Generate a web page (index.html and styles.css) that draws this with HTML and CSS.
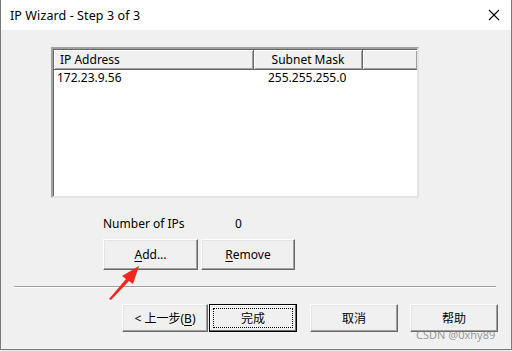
FILE: index.html
```html
<!DOCTYPE html>
<html>
<head>
<meta charset="utf-8">
<link rel="stylesheet" href="styles.css">
</head>
<body>
<div class="window">
  <div class="titlebar">
    <span class="title">IP Wizard - Step 3 of 3</span>
    <svg class="close" width="12" height="12" viewBox="0 0 12 12"><path d="M1 1 L11 11 M11 1 L1 11" stroke="#000" stroke-width="1.1" fill="none"/></svg>
  </div>
  <div class="content">
    <div class="list">
      <div class="header">
        <div class="hcell c1">IP Address</div>
        <div class="hcell c2">Subnet Mask</div>
        <div class="hcell c3"></div>
      </div>
      <div class="row">
        <div class="cell c1">172.23.9.56</div>
        <div class="cell c2">255.255.255.0</div>
      </div>
    </div>
    <div class="count">
      <span class="count-label">Number of IPs</span>
      <span class="count-val">0</span>
    </div>
    <div class="actions">
      <button class="btn btn-add"><u>A</u>dd...</button>
      <button class="btn btn-remove"><u>R</u>emove</button>
    </div>
    <div class="sep"></div>
    <div class="footer">
      <button class="btn fbtn back">&lt;&nbsp;上一步(<u>B</u>)</button>
      <button class="btn fbtn finish"><span class="focus">完成</span></button>
      <button class="btn fbtn cancel">取消</button>
      <button class="btn fbtn help">帮助</button>
    </div>
  </div>
  <svg class="arrow" width="40" height="40" viewBox="0 0 40 40"><path d="M3 37 L20 17 L16 14 L33 4 L27 22 L23 19 L5 38 Z" fill="#f0281e"/></svg>
  <span class="watermark">CSDN @0xhy89</span>
</div>
</body>
</html>
```
FILE: styles.css
```css
html, body {
  margin: 0;
  padding: 0;
  background: #e6e6e6;
}
body {
  width: 512px;
  height: 351px;
  overflow: hidden;
  font-family: "Noto Sans", "Noto Sans CJK SC", sans-serif;
  font-size: 12px;
  color: #000;
}
.window {
  position: relative;
  width: 510px;
  height: 349px;
  border-left: 1px solid #7a7a7a;
  border-right: 1px solid #7a7a7a;
  border-bottom: 1px solid #7a7a7a;
  background: #f0f0f0;
  display: flex;
  flex-direction: column;
}
.titlebar {
  height: 30px;
  background: #fff;
  display: flex;
  align-items: center;
  justify-content: space-between;
  padding: 0 10px 0 9px;
}
.title {
  font-size: 12.5px;
  letter-spacing: 0.1px;
}
.close {
  margin-right: 1px;
}
.content {
  padding: 17px 0 0 0;
}
.list {
  margin-left: 50px;
  width: 364px;
  height: 147px;
  background: #fff;
  border: 2px solid;
  border-color: #a0a0a0 #e3e3e3 #e3e3e3 #a0a0a0;
  box-shadow: inset 1px 1px 0 #696969;
}
.header {
  display: flex;
  height: 20px;
  margin-left: 1px;
  margin-top: 1px;
}
.hcell {
  box-sizing: border-box;
  height: 20px;
  background: #f0f0f0;
  border-right: 1px solid #696969;
  border-bottom: 1px solid #696969;
  box-shadow: inset 1px 1px 0 #fff, inset -1px -1px 0 #a0a0a0;
  line-height: 19px;
}
.hcell.c1 {
  width: 200px;
  padding-left: 6px;
}
.hcell.c2 {
  width: 109px;
  text-align: center;
}
.hcell.c3 {
  flex: 1;
  border-right: none;
}
.row {
  display: flex;
  height: 16px;
  line-height: 16px;
  margin-left: 1px;
}
.cell.c1 {
  width: 200px;
  padding-left: 3px;
  box-sizing: border-box;
}
.cell.c2 {
  width: 109px;
  padding-left: 14px;
  box-sizing: border-box;
}
.count {
  display: flex;
  margin: 17px 0 0 102px;
  height: 17px;
  line-height: 17px;
}
.count-label {
  width: 132px;
}
.btn {
  box-sizing: border-box;
  font-family: "Noto Sans", "Noto Sans CJK SC", sans-serif;
  font-size: 12px;
  color: #000;
  background: #f0f0f0;
  border: 1px solid;
  border-color: #fff #696969 #696969 #fff;
  box-shadow: inset -1px -1px 0 #a0a0a0, inset 1px 1px 0 #e3e3e3;
  padding: 0;
  margin: 0;
}
.actions {
  display: flex;
  gap: 3px;
  margin: 7px 0 0 102px;
}
.btn-add {
  width: 95px;
  height: 31px;
}
.btn-remove {
  width: 94px;
  height: 31px;
}
.sep {
  margin: 16px 0 0 13px;
  width: 482px;
  height: 1px;
  background: #a0a0a0;
  border-bottom: 1px solid #fff;
}
.footer {
  display: flex;
  margin: 16px 0 0 121px;
}
.fbtn {
  height: 28px;
  width: 88px;
}
.back {
  width: 86px;
  margin-right: 1px;
}
.finish {
  border: 1px solid #000;
  box-shadow: inset -1px -1px 0 #696969, inset 1px 1px 0 #fff;
  margin-right: 13px;
  padding: 3px;
}
.finish .focus {
  display: flex;
  align-items: center;
  justify-content: center;
  width: 100%;
  height: 100%;
  box-sizing: border-box;
  border: 1px dotted #000;
}
.cancel {
  margin-right: 12px;
}
u {
  text-decoration: underline;
  text-underline-offset: 2px;
}
.arrow {
  position: absolute;
  left: 105px;
  top: 262px;
}
.watermark {
  position: absolute;
  left: 415px;
  top: 327px;
  font-size: 11px;
  color: rgba(120, 120, 120, 0.75);
}
```
